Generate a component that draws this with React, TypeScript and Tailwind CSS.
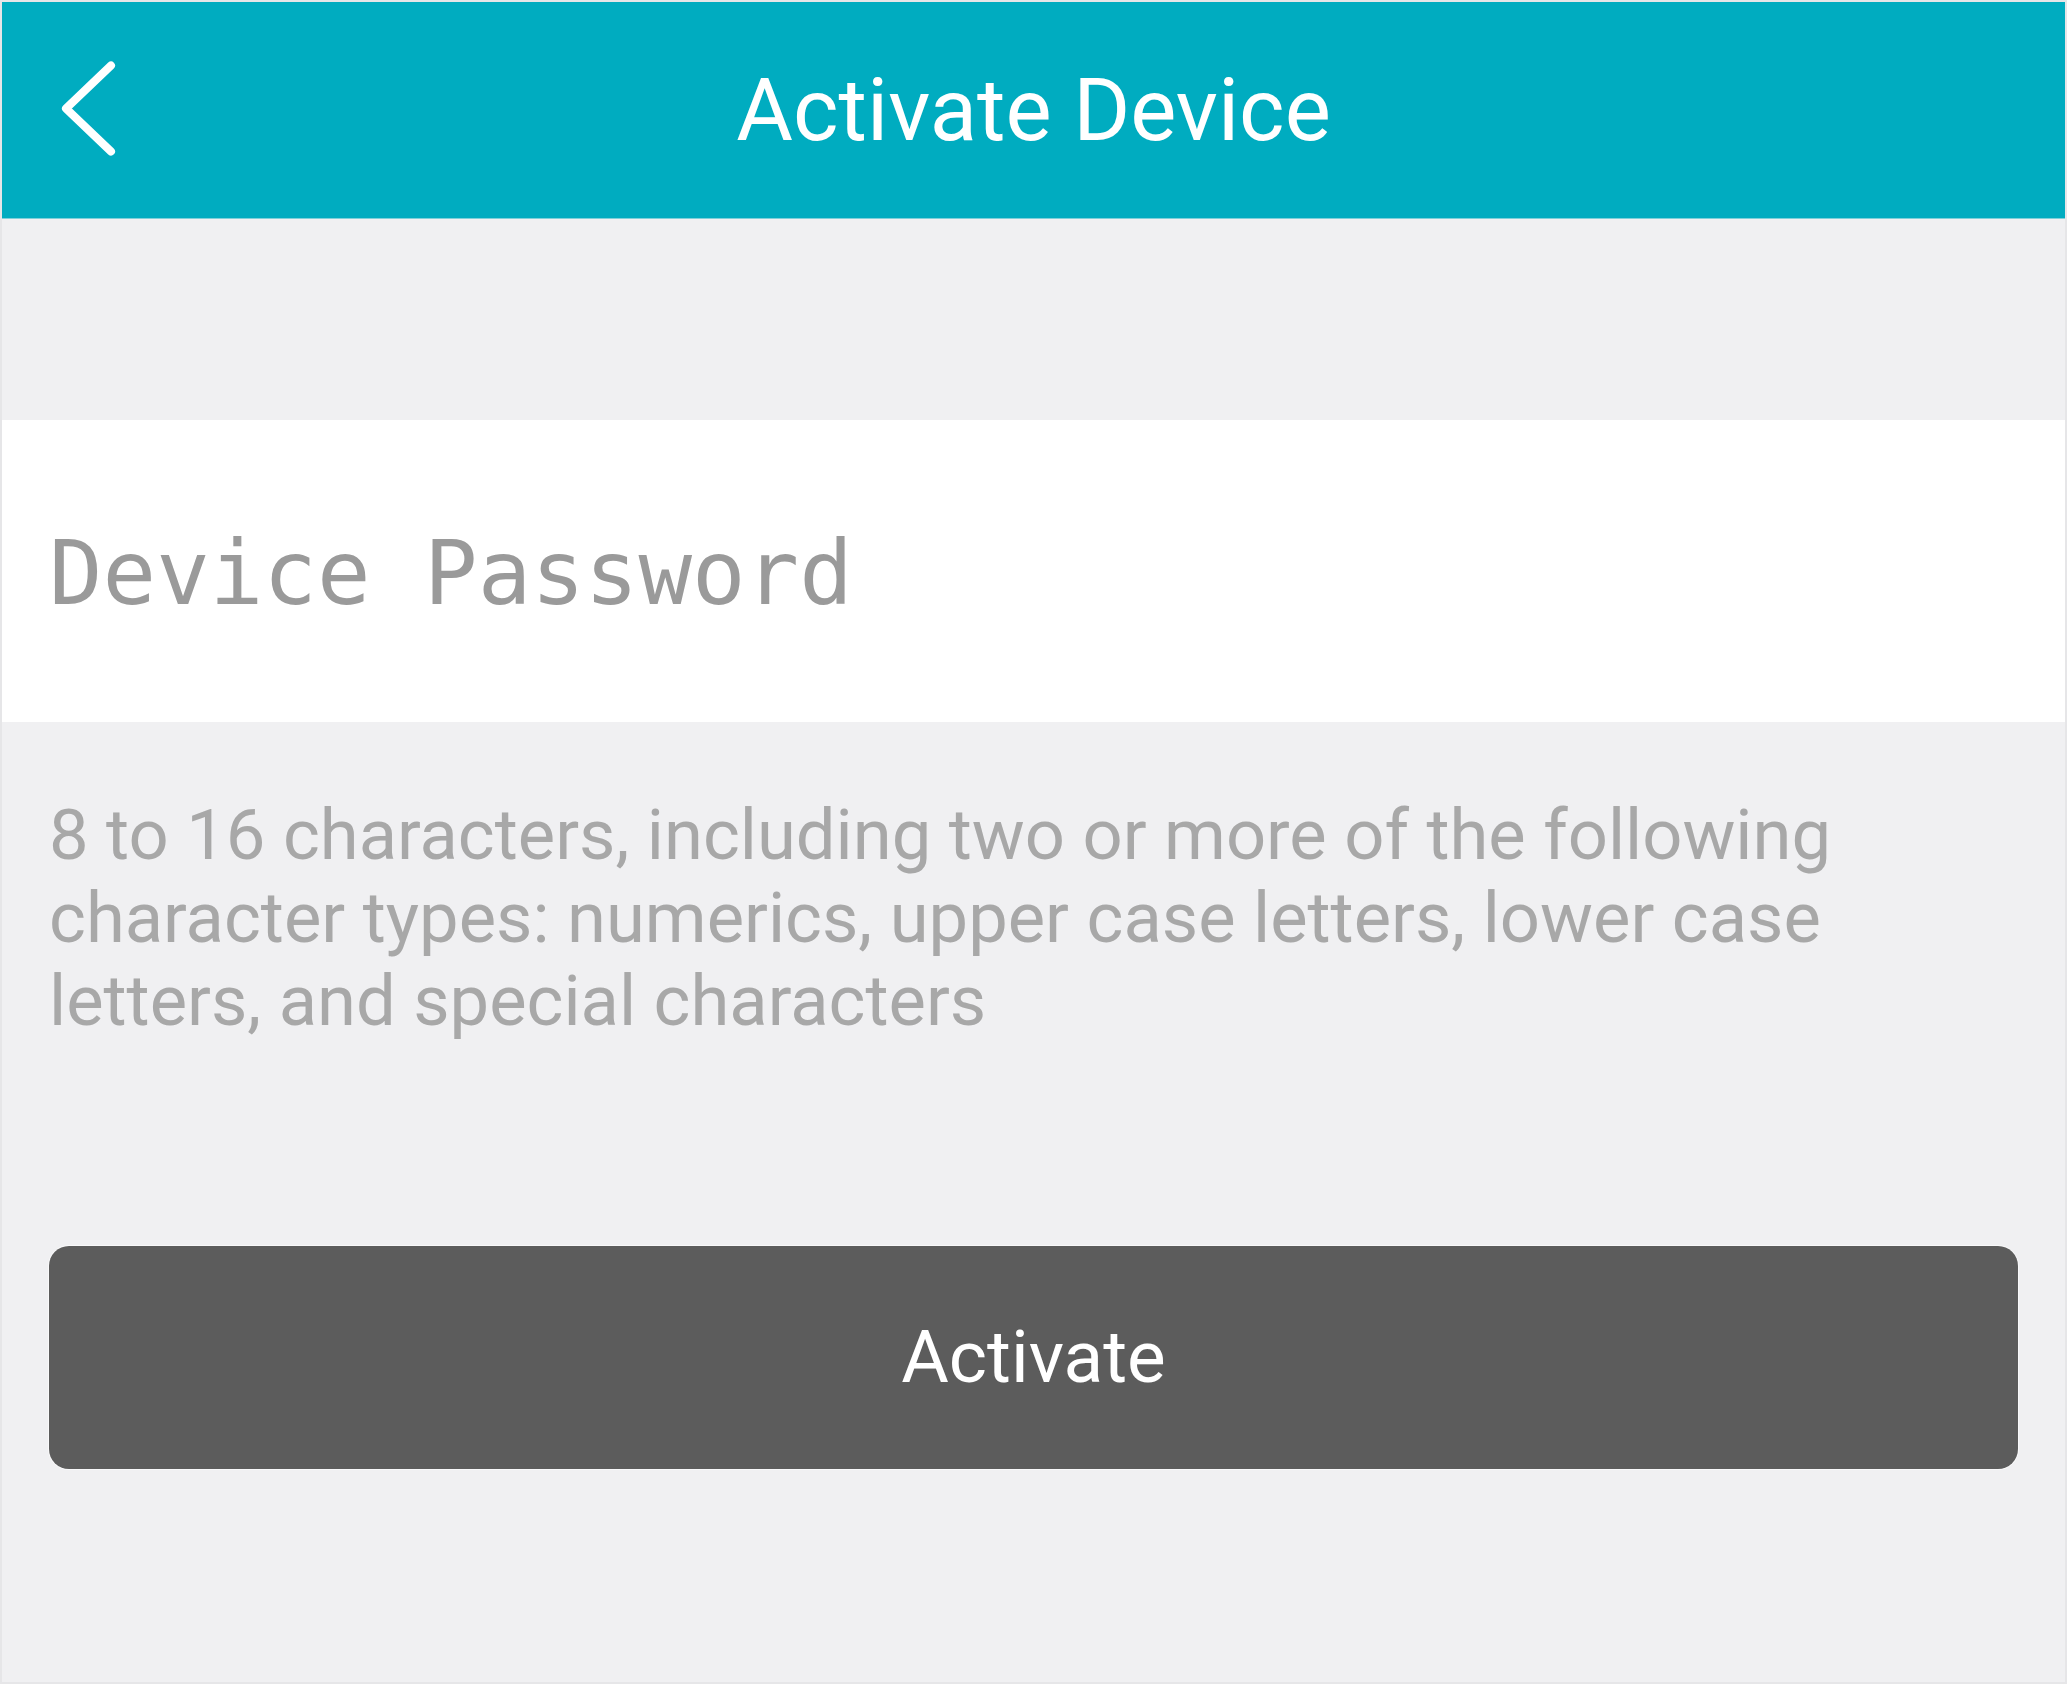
import React from "react";

const BackIcon: React.FC = () => (
  <svg width="60" height="110" viewBox="0 0 60 110" fill="none">
    <polyline
      points="55,10.5 10,53.5 55,96.5"
      stroke="white"
      strokeWidth="8"
      strokeLinecap="round"
      strokeLinejoin="round"
    />
  </svg>
);

export default function App() {
  return (
    <div className="w-full h-[1684px] border-2 border-[#e6e6e8] bg-[#f0f0f2] flex flex-col font-['Roboto',sans-serif]">
      {/* header */}
      <div className="h-[217px] shrink-0 bg-[#00acc0] grid grid-cols-[1fr_auto_1fr] items-center border-b border-[#7fd0da]">
        <div className="pl-[54px] flex items-center">
          <button className="flex items-center">
            <BackIcon />
          </button>
        </div>
        <div className="text-white text-[87px] leading-none">Activate Device</div>
        <div />
      </div>

      <div className="h-[201px] shrink-0" />

      {/* password field */}
      <div className="h-[302px] shrink-0 bg-white flex items-center">
        <input
          type="password"
          placeholder="Device Password"
          className="w-full h-full bg-transparent outline-none pl-[47px] pr-[47px] pt-[4px] text-[89px] font-['DejaVu_Sans_Mono',monospace] text-[#333] placeholder:text-[#9a9a9a]"
        />
      </div>

      <div className="px-[47px]">
        <p className="mt-[72px] text-[70.5px] leading-[83px] text-[#a8a8a8]">
          8 to 16 characters, including two or more of the following character types: numerics, upper case letters, lower case letters, and special characters
        </p>

        <button className="mt-[203px] w-full h-[223px] rounded-[20px] bg-[#5c5c5c] flex items-center justify-center text-white text-[73px] leading-none shadow-[0_0_0_1px_rgba(255,255,255,0.6)]">
          Activate
        </button>
      </div>
    </div>
  );
}
